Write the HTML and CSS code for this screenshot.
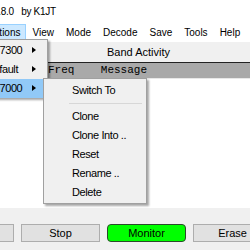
FILE: index.html
```html
<!DOCTYPE html>
<html lang="en">
  <head>
    <meta charset="utf-8">
    <title>WSJT-X</title>
    <link rel="stylesheet" href="styles.css">
  </head>
  <body>
    <div id="window">
      <div class="titlebar"><span class="title">WSJT-X   v1.8.0   by K1JT</span></div>
      <div class="menubar">
        <span class="menu menu-open">Configurations</span>
        <span class="menu">View</span>
        <span class="menu">Mode</span>
        <span class="menu">Decode</span>
        <span class="menu">Save</span>
        <span class="menu">Tools</span>
        <span class="menu">Help</span>
      </div>
      <div class="pane-label">Band Activity</div>
      <div class="pane-header">Freq    Message</div>
      <div class="pane-text"></div>
      <div class="buttonbar">
        <span class="button">Log QSO</span>
        <span class="button">Stop</span>
        <span class="button button-monitor">Monitor</span>
        <span class="button">Erase</span>
      </div>

      <!-- Configurations dropdown -->
      <div class="dropdown">
        <div class="item">IC-7300<i class="arrow"></i></div>
        <div class="item">Default<i class="arrow"></i></div>
        <div class="item item-active">IC-7000<i class="arrow"></i></div>
      </div>
      <div class="submenu">
        <div class="item">Switch To</div>
        <div class="sep"></div>
        <div class="item">Clone</div>
        <div class="item">Clone Into ..</div>
        <div class="item">Reset</div>
        <div class="item">Rename ..</div>
        <div class="item">Delete</div>
      </div>
    </div>
  </body>
</html>
```

FILE: styles.css
```css
html, body{
  margin:0;
  padding:0;
}
body{
  width:250px;
  height:250px;
  overflow:hidden;
  font-family:"Liberation Sans", Arial, sans-serif;
  font-size:11px;
  color:#000;
}
#window{
  position:relative;
  width:250px;
  height:250px;
  background:#f0f0f0;
  display:flex;
  flex-direction:column;
}
/*title and menu bar*/
.titlebar{
  height:24px;
  line-height:24px;
  background:#fff;
  white-space:pre;
  font-size:10px;
  letter-spacing:-0.3px;
}
.title{
  margin-left:-54px;
}
.menubar{
  height:18px;
  background:#fff;
  display:flex;
  align-items:stretch;
  white-space:nowrap;
  font-size:10px;
}
.menu{
  box-sizing:border-box;
  line-height:16px;
  padding:0 5px;
  border:1px solid transparent;
}
.menu-open{
  margin-left:-45px;
  padding-left:0;
  background:#cce8ff;
  border-color:#99d1ff;
}
/*band activity pane*/
.pane-label{
  height:20px;
  line-height:20px;
  padding-left:107px;
}
.pane-header{
  height:15px;
  line-height:15px;
  padding-left:48px;
  background:#a9a9a9;
  border-top:1px solid #222;
  border-bottom:1px solid #e8e8e8;
  font-family:"Liberation Mono", "Courier New", monospace;
  font-size:11px;
  white-space:pre;
}
.pane-text{
  height:129px;
  background:#fff;
}
/*buttons*/
.buttonbar{
  display:flex;
  gap:7px;
  margin-top:16px;
  margin-left:-65px;
}
.button{
  flex:none;
  box-sizing:border-box;
  width:79px;
  height:18px;
  line-height:16px;
  text-align:center;
  background:#e1e1e1;
  border:1px solid #adadad;
}
.button-monitor{
  background:#00ff00;
  border-color:#2b4a2b;
  border-radius:4px;
}
/*popup menus*/
.dropdown, .submenu{
  position:absolute;
  box-sizing:border-box;
  background:#f0f0f0;
  border:1px solid #a0a0a0;
  box-shadow:2px 2px 2px rgba(0,0,0,0.35);
  white-space:nowrap;
  letter-spacing:-0.4px;
}
.dropdown{
  left:-62px;
  top:39px;
  width:110px;
  height:59px;
  padding-top:1px;
}
.dropdown .item{
  position:relative;
  height:19px;
  line-height:19px;
  padding-left:47px;
}
.item-active{
  background:#91c9f7;
}
.arrow{
  position:absolute;
  right:11px;
  top:6px;
  width:0;
  height:0;
  border-left:4px solid #000;
  border-top:3.5px solid transparent;
  border-bottom:3.5px solid transparent;
}
.submenu{
  left:43px;
  top:78px;
  width:104px;
  padding:2px 0 1px;
  z-index:2;
}
.submenu .item{
  height:19px;
  line-height:19px;
  padding-left:28px;
}
.sep{
  height:1px;
  margin:3px 4px 3px 25px;
  background:#d7d7d7;
}
```
